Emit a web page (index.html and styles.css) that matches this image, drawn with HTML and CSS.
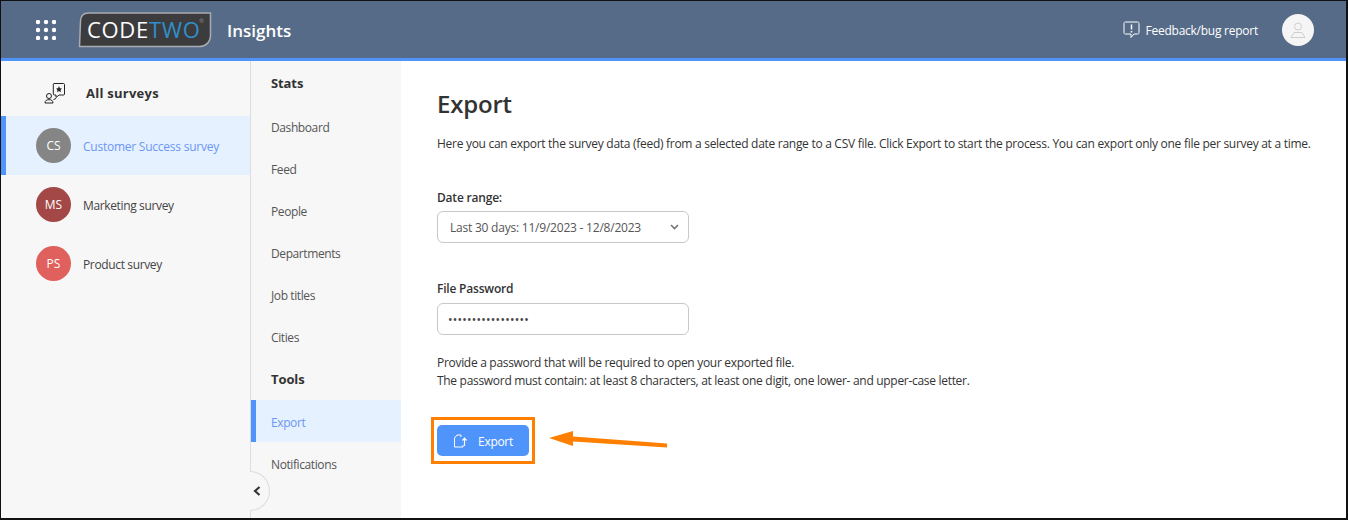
FILE: index.html
```html
<!DOCTYPE html>
<html lang="en">
<head>
<meta charset="utf-8">
<title>Export - CodeTwo Insights</title>
<link rel="stylesheet" href="styles.css">
</head>
<body>
<div class="frame">
  <header class="topbar">
    <div class="topbar-left">
      <svg class="apps" width="20" height="20" viewBox="0 0 20 20" fill="#fff"><circle cx="2" cy="2" r="2.200"/><circle cx="10" cy="2" r="2.200"/><circle cx="18" cy="2" r="2.200"/><circle cx="2" cy="10" r="2.200"/><circle cx="10" cy="10" r="2.200"/><circle cx="18" cy="10" r="2.200"/><circle cx="2" cy="18" r="2.200"/><circle cx="10" cy="18" r="2.200"/><circle cx="18" cy="18" r="2.200"/></svg>
      <svg class="logo" width="134" height="36" viewBox="0 0 134 36">
        <path d="M10.500 1H132.500V23C132.500 30 128 34.500 121 34.500H1.500L2.500 9C2.700 4 5.500 1 10.500 1Z" fill="#3c3c3e" stroke="#a9acb0" stroke-width="1.500"/>
        <text x="9" y="25.500" class="logo-text"><tspan fill="#fff">CODE</tspan><tspan fill="#2f8fcb">TWO</tspan></text>
        <text x="121" y="11" class="logo-mark">®</text>
      </svg>
      <span class="product">Insights</span>
    </div>
    <div class="topbar-right">
      <span class="feedback">
        <svg width="17" height="18" viewBox="0 0 17 18" fill="none" stroke="#fff" stroke-width="1"><path d="M2.500 1H14.500C15.500 1 16 1.500 16 2.500V11.500C16 12.500 15.500 13 14.500 13H11L8 16.500V13H2.500C1.500 13 1 12.500 1 11.500V2.500C1 1.500 1.500 1 2.500 1Z"/><path d="M8.500 3.500V8.500M8.500 10V11.500" stroke-width="1.500"/></svg>
        <span class="feedback-text">Feedback/bug report</span>
      </span>
      <span class="avatar-user">
        <svg width="16" height="16" viewBox="0 0 16 16" fill="none" stroke="#cfcfcf" stroke-width="1"><circle cx="8" cy="4.500" r="3.500"/><path d="M1 15.500L4 10.500H12L15 15.500Z"/></svg>
      </span>
    </div>
  </header>
  <div class="body-row">
    <aside class="surveys">
      <div class="surveys-head">
        <svg width="22" height="22" viewBox="0 0 22 22" fill="none" stroke="#222" stroke-width="1"><path d="M10 1.500H19.500C20.300 1.500 20.500 2 20.500 2.500V12C20.500 12.700 20 13 19.500 13H15L12 15.500V13H10.500C9.700 13 9.300 12.500 9.300 12V2.500C9.300 2 9.500 1.500 10 1.500Z"/><path d="M15 4L15.900 6.300L18 6.500L16.500 8L17 10.200L15 9L13 10.200L13.500 8L12 6.500L14.100 6.300Z" fill="#222" stroke="none"/><circle cx="5" cy="14" r="2.500"/><path d="M1 21C1 18.500 2.500 17.700 5 17.700C7.500 17.700 9 18.500 9 21Z"/><path d="M9.500 17.500L12 16.500"/></svg>
        <span>All surveys</span>
      </div>
      <a class="survey active"><span class="badge badge-gray">CS</span><span class="survey-name">Customer Success survey</span></a>
      <a class="survey"><span class="badge badge-maroon">MS</span><span class="survey-name">Marketing survey</span></a>
      <a class="survey"><span class="badge badge-red">PS</span><span class="survey-name">Product survey</span></a>
    </aside>
    <nav class="subnav">
      <h3 class="nav-title">Stats</h3>
      <a class="nav-item">Dashboard</a>
      <a class="nav-item">Feed</a>
      <a class="nav-item">People</a>
      <a class="nav-item">Departments</a>
      <a class="nav-item">Job titles</a>
      <a class="nav-item">Cities</a>
      <h3 class="nav-title nav-title-tools">Tools</h3>
      <a class="nav-item active">Export</a>
      <a class="nav-item">Notifications</a>
      <button class="collapse" type="button" aria-label="Collapse">
        <svg width="8" height="10" viewBox="0 0 8 10" fill="none" stroke="#333" stroke-width="2.200"><path d="M6.500 1L2 5L6.500 9"/></svg>
      </button>
    </nav>
    <main class="content">
      <h1 class="page-title">Export</h1>
      <p class="intro">Here you can export the survey data (feed) from a selected date range to a CSV file. Click Export to start the process. You can export only one file per survey at a time.</p>
      <div class="field field-date">
        <label class="field-label">Date range:</label>
        <div class="control control-select">
          <span>Last 30 days: 11/9/2023 - 12/8/2023</span>
          <svg width="9" height="6" viewBox="0 0 9 6" fill="none" stroke="#777" stroke-width="1.600"><path d="M1 1L4.500 4.500L8 1"/></svg>
        </div>
      </div>
      <div class="field field-pass">
        <label class="field-label">File Password</label>
        <div class="control control-pass">•••••••••••••••••</div>
      </div>
      <p class="hint">Provide a password that will be required to open your exported file.<br>The password must contain: at least 8 characters, at least one digit, one lower- and upper-case letter.</p>
      <button class="export-btn" type="button">
        <svg width="14" height="14" viewBox="0 0 14 14" fill="none" stroke="#fff" stroke-width="1"><path d="M8 1H4L1.500 4V13H10V11"/><path d="M8 1V3"/><path d="M11.500 12V4.500M9.500 6.500L11.500 4.200L13.500 6.500" stroke-width="1.200"/></svg>
        <span class="export-label">Export</span>
      </button>
    </main>
  </div>
  <div class="callout-box"></div>
  <svg class="callout-arrow" width="122" height="24" viewBox="0 0 122 24"><path d="M0 8L24 1V6.500L118 13.500L118 17.500L24 11.500L24 16Z" fill="#ff7f00"/></svg>
</div>
</body>
</html>
```
FILE: styles.css
```css
* { box-sizing: border-box; }
html, body { margin: 0; padding: 0; }
body {
  width: 1348px;
  height: 520px;
  overflow: hidden;
  font-family: "Open Sans", "Noto Sans", sans-serif;
  font-size: 12px;
  color: #333;
  background: #fff;
}
.frame {
  position: relative;
  width: 1348px;
  height: 520px;
  border: 1px solid #111;
  border-bottom-width: 2px;
  border-right-width: 2px;
  display: flex;
  flex-direction: column;
}
.topbar {
  height: 60px;
  flex: none;
  background: #566b88;
  border-bottom: 3px solid #4f94fb;
  display: flex;
  align-items: center;
  justify-content: space-between;
  color: #fff;
}
.topbar-left { display: flex; align-items: center; padding-left: 35px; }
.apps { margin-right: 22px; margin-top: 1px; }
.logo { margin-right: 15px; }
.logo-text { font-family: "Open Sans", sans-serif; font-size: 22px; font-weight: 400; letter-spacing: 0.700px; }
.logo-mark { font-family: "Open Sans", sans-serif; font-size: 6px; fill: #8a8a8a; }
.product { font-size: 17px; font-weight: 600; padding-top: 1px; }
.topbar-right { display: flex; align-items: center; padding-right: 32px; }
.feedback { display: flex; align-items: center; gap: 6px; font-size: 12px; letter-spacing: -0.250px; margin-right: 24px; }
.feedback-text { padding-top: 2px; }
.avatar-user {
  width: 32px;
  height: 32px;
  border-radius: 50%;
  background: #f5f5f5;
  display: flex;
  align-items: center;
  justify-content: center;
}
.body-row { flex: 1; display: flex; min-height: 0; }
.surveys {
  width: 250px;
  flex: none;
  background: #f7f7f7;
  border-right: 1px solid #ddd;
}
.surveys-head {
  height: 55px;
  display: flex;
  align-items: center;
  gap: 20px;
  padding: 8px 0 0 43px;
  font-size: 13px;
  font-weight: 700;
  letter-spacing: 0.250px;
  color: #333;
}
.survey {
  height: 59px;
  display: flex;
  align-items: center;
  gap: 12px;
  padding-left: 35px;
  font-size: 12px;
  letter-spacing: -0.360px;
  color: #444;
}
.survey-name { padding-top: 2px; }
.survey.active {
  background: #e6f1ff;
  border-left: 5px solid #4f94fb;
  padding-left: 30px;
  color: #6b96f5;
  font-weight: 500;
  letter-spacing: -0.240px;
}
.badge {
  width: 35px;
  height: 35px;
  border-radius: 50%;
  display: flex;
  align-items: center;
  justify-content: center;
  color: #fff;
  font-size: 12px;
  font-weight: 400;
  letter-spacing: 0;
}
.badge-gray { background: #858585; }
.badge-maroon { background: #a34747; }
.badge-red { background: #e0605e; }
.subnav {
  position: relative;
  width: 150px;
  flex: none;
  background: #f7f7f7;
}
.nav-title {
  margin: 0;
  height: 44px;
  display: flex;
  align-items: center;
  padding-left: 20px;
  font-size: 13px;
  font-weight: 700;
  letter-spacing: -0.100px;
  color: #333;
}
.nav-title-tools { height: 43px; }
.nav-item {
  height: 42px;
  display: flex;
  align-items: center;
  padding: 2px 0 0 20px;
  font-size: 12px;
  letter-spacing: -0.400px;
  color: #555;
}
.nav-item.active {
  background: #e6f1ff;
  border-left: 5px solid #4f94fb;
  padding-left: 15px;
  color: #6b96f5;
}
.collapse {
  position: absolute;
  left: -1px;
  top: 410px;
  width: 20px;
  height: 40px;
  padding: 0 0 0 3px;
  border: 1px solid #ddd;
  border-left: 0;
  border-radius: 0 20px 20px 0;
  background: #f7f7f7;
  display: flex;
  align-items: center;
  justify-content: flex-start;
}
.content { flex: 1; padding: 27px 0 0 36px; background: #fff; }
.page-title { margin: 0; font-size: 24px; line-height: 32px; font-weight: 600; color: #333; letter-spacing: -0.200px; }
.intro { margin: 15px 0 0; line-height: 17px; letter-spacing: -0.285px; color: #333; white-space: nowrap; }
.field-label { display: block; font-weight: 600; line-height: 17px; letter-spacing: -0.200px; color: #333; }
.field-date { margin-top: 37px; }
.field-pass { margin-top: 37px; }
.control {
  width: 252px;
  height: 32px;
  margin-top: 5px;
  border: 1px solid #c8c8c8;
  border-radius: 6px;
  background: #fff;
  display: flex;
  align-items: center;
  letter-spacing: -0.220px;
  color: #555;
}
.control-select { justify-content: space-between; padding: 0 9px 0 12px; }
.control-pass { margin-top: 6px; padding-left: 10px; color: #444; font-size: 12px; letter-spacing: 0.250px; }
.hint { margin: 19px 0 0; line-height: 18px; letter-spacing: -0.300px; color: #333; white-space: nowrap; }
.export-btn {
  margin-top: 35px;
  width: 92px;
  height: 31px;
  display: flex;
  align-items: center;
  justify-content: center;
  gap: 11px;
  background: #4f94fb;
  color: #fff;
  border: 0;
  border-radius: 5px;
  font-family: inherit;
  font-size: 12px;
  letter-spacing: -0.300px;
}
.export-label { padding-top: 2px; }
.callout-box {
  position: absolute;
  left: 430px;
  top: 416px;
  width: 104px;
  height: 47px;
  border: 3px solid #ff7f00;
}
.callout-arrow { position: absolute; left: 548px; top: 429px; }
```
